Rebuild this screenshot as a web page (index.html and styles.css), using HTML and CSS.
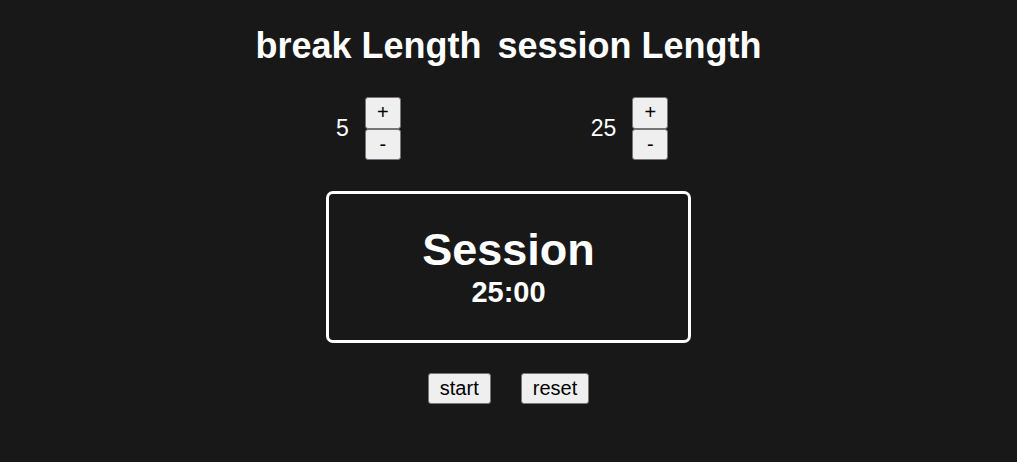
FILE: index.html
```html
<!DOCTYPE html>
<html>
<head>
<meta charset="utf-8">
<link rel="stylesheet" href="styles.css">
</head>
<body>
<div class="app">
  <div class="settings">
    <div class="setting">
      <h2 class="label">break Length</h2>
      <div class="control">
        <span class="value">5</span>
        <div class="stepper">
          <button class="btn step">+</button>
          <button class="btn step">-</button>
        </div>
      </div>
    </div>
    <div class="setting">
      <h2 class="label">session Length</h2>
      <div class="control">
        <span class="value">25</span>
        <div class="stepper">
          <button class="btn step">+</button>
          <button class="btn step">-</button>
        </div>
      </div>
    </div>
  </div>
  <div class="timer">
    <div class="timer-label">Session</div>
    <div class="timer-time">25:00</div>
  </div>
  <div class="actions">
    <button class="btn action">start</button>
    <button class="btn action">reset</button>
  </div>
</div>
</body>
</html>
```
FILE: styles.css
```css
html, body {
  margin: 0;
  padding: 0;
  background: #181818;
  color: #ffffff;
  font-family: "Liberation Sans", Arial, sans-serif;
}
.app {
  display: flex;
  flex-direction: column;
  align-items: center;
  padding-top: 25px;
}
.settings {
  display: flex;
  gap: 16px;
}
.setting {
  display: flex;
  flex-direction: column;
  align-items: center;
}
.label {
  margin: 0;
  font-size: 36px;
  font-weight: bold;
  line-height: 41px;
}
.control {
  display: flex;
  align-items: center;
  gap: 16px;
  margin-top: 31px;
}
.value {
  font-size: 23px;
}
.stepper {
  display: flex;
  flex-direction: column;
}
.btn {
  font-family: "Liberation Sans", Arial, sans-serif;
  background: #efefef;
  color: #000;
  border: 1px solid #767676;
  border-radius: 3px;
  padding: 0;
  box-sizing: border-box;
}
.step {
  width: 36px;
  height: 31.5px;
  font-size: 20px;
}
.timer {
  margin-top: 31px;
  width: 365px;
  height: 152px;
  box-sizing: border-box;
  border: 3px solid #ffffff;
  border-radius: 7px;
  display: flex;
  flex-direction: column;
  align-items: center;
  justify-content: center;
  font-weight: bold;
}
.timer-label {
  font-size: 45px;
  line-height: 50px;
}
.timer-time {
  font-size: 29px;
  line-height: 34px;
}
.actions {
  display: flex;
  gap: 30px;
  margin-top: 30px;
}
.action {
  height: 31px;
  font-size: 20px;
  padding: 0 11px;
}
```
